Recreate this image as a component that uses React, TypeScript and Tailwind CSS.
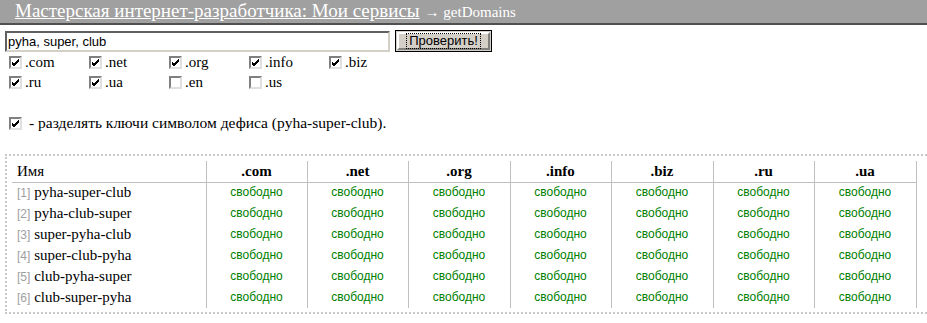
import React from 'react';

const zones = ['.com', '.net', '.org', '.info', '.biz', '.ru', '.ua'];
const picks = [
  { name: '.com', on: true },
  { name: '.net', on: true },
  { name: '.org', on: true },
  { name: '.info', on: true },
  { name: '.biz', on: true },
  { name: '.ru', on: true },
  { name: '.ua', on: true },
  { name: '.en', on: false },
  { name: '.us', on: false },
];
const names = [
  'pyha-super-club',
  'pyha-club-super',
  'super-pyha-club',
  'super-club-pyha',
  'club-pyha-super',
  'club-super-pyha',
];
const colW = [101, 101, 102, 101, 102, 101, 102];

const Box = ({ on }: { on: boolean }) => (
  <span className="inline-flex w-[13px] h-[13px] bg-white border-2 border-t-[#808080] border-l-[#808080] border-b-[#e0e0e0] border-r-[#e0e0e0] shrink-0 items-center justify-center">
    {on && (
      <svg width="9" height="9" viewBox="0 0 9 9">
        <path d="M1 4 L3 6 L8 1 M1 5 L3 7 L8 2 M1 6 L3 8 L8 3" stroke="#000" strokeWidth="1" fill="none" shapeRendering="crispEdges" />
      </svg>
    )}
  </span>
);

export default function App() {
  return (
    <div className="w-[927px] h-[323px] bg-white font-['Liberation_Serif','Times_New_Roman',serif] text-black overflow-hidden">
      <div className="h-[25px] bg-[#a0a0a0] border-b-2 border-[#505050] pl-[15px] flex items-end pb-[2px] text-white">
        <a className="underline text-[19px] leading-[20px]">Мастерская интернет-разработчика: Мои сервисы</a>
        <span className="text-[15px] leading-[18px] ml-[5px]">→ getDomains</span>
      </div>

      <div className="pl-[5px] pt-[5px] flex items-center">
        <input
          readOnly
          value="pyha, super, club"
          className="w-[385px] h-[21px] border-2 border-t-[#606060] border-l-[#606060] border-b-[#d4d0c8] border-r-[#d4d0c8] px-[1px] text-[13px] font-['Liberation_Sans',Arial,sans-serif] outline-none"
        />
        <button className="ml-[5px] w-[97px] h-[22px] bg-[#d4d0c8] border border-black p-[1px] font-['Liberation_Sans',Arial,sans-serif] text-[13px]">
          <span className="flex items-center justify-center h-full border-2 border-t-white border-l-white border-b-[#808080] border-r-[#808080]">
            <span className="outline-1 outline-dotted outline-black px-[2px] leading-[14px]">Проверить!</span>
          </span>
        </button>
      </div>

      <div className="pl-[9px] pt-[4px] grid grid-cols-[80px_80px_80px_80px_80px] gap-y-[7px] text-[15px] leading-[13px]">
        {picks.map((p) => (
          <label key={p.name} className="flex items-center gap-[3px]">
            <Box on={p.on} />
            <span>{p.name}</span>
          </label>
        ))}
      </div>

      <div className="pl-[9px] mt-[27px] flex items-center gap-[7px] text-[15.5px] leading-[14px]">
        <Box on />
        <span>- разделять ключи символом дефиса (pyha-super-club).</span>
      </div>

      <div className="ml-[5px] mt-[24px] border-2 border-r-0 border-dotted border-[#c8c8c8] pl-[5px] pt-[5px] pb-[4px]">
        <table className="table-fixed border-collapse text-[15px]">
          <colgroup>
            <col className="w-[194px]" />
            {colW.map((w, i) => (
              <col key={i} style={{ width: w }} />
            ))}
          </colgroup>
          <thead>
            <tr>
              <th className="h-[21px] p-0 text-left font-normal pl-[5px] border-b border-r border-[#c0c0c0] leading-[18px]">Имя</th>
              {zones.map((z) => (
                <th key={z} className="h-[21px] p-0 font-bold border-b border-r border-[#c0c0c0] leading-[18px]">{z}</th>
              ))}
            </tr>
          </thead>
          <tbody>
            {names.map((n, i) => (
              <tr key={n}>
                <td className="h-[21px] p-0 pl-[5px] border-r border-[#c0c0c0] whitespace-nowrap leading-[17px]">
                  <span className="text-[#a0a0a0] text-[12px] font-['Liberation_Sans',Arial,sans-serif]">[{i + 1}]</span> {n}
                </td>
                {zones.map((z) => (
                  <td key={z} className="h-[21px] p-0 text-center border-r border-[#c0c0c0] text-[#008000] text-[12px] leading-[17px] font-['Liberation_Sans',Arial,sans-serif]">
                    свободно
                  </td>
                ))}
              </tr>
            ))}
          </tbody>
        </table>
      </div>
    </div>
  );
}
